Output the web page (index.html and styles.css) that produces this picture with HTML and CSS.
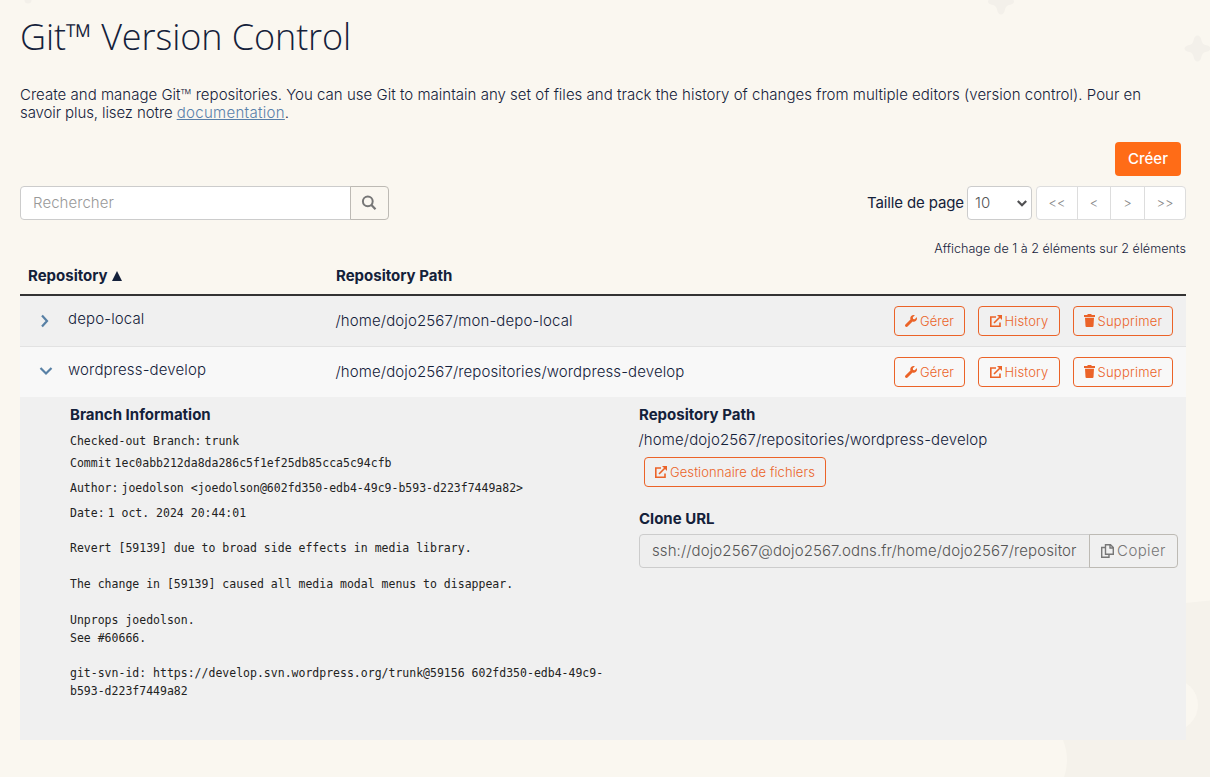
FILE: index.html
```html
<!DOCTYPE html>
<html lang="fr">
<head>
<meta charset="utf-8">
<title>Git™ Version Control</title>
<link rel="stylesheet" href="styles.css">
</head>
<body>
<svg class="backdrop" width="1210" height="777" viewBox="0 0 1210 777" aria-hidden="true">
  <defs><path id="star" d="M0-13Q3-13 4-8Q5-4 8-3.500Q13-2.500 13 0Q13 2.500 8 3.500Q5 4 4 8Q3 13 0 13Q-3 13-4 8Q-5 4-8 3.500Q-13 2.500-13 0Q-13-2.500-8-3.500Q-5-4-4-8Q-3-13 0-13Z"/></defs>
  <g fill="#f3f0ea"><use href="#star" x="1001" y="1.500"/><use href="#star" x="1197.500" y="48.500"/><circle cx="28" cy="0" r="3.500"/></g>
  <path fill="#f5f2eb" d="M1050 777V640Q1120 608 1210 600.500V777Z"/>
  <circle cx="1017" cy="760" r="50" fill="#faf7f0"/>
  <circle cx="1172" cy="705" r="26" fill="#faf7f0"/>
</svg>
<svg width="0" height="0" class="sprite" aria-hidden="true">
  <symbol id="wrench" viewBox="0 0 512 512"><path d="M507.700 109.100c-2.200-9-13.500-12.100-20.100-5.500l-74.400 74.400-67.900-11.300L334 98.900l74.400-74.400c6.600-6.600 3.400-17.900-5.700-20.200-47.400-11.700-99.600.9-136.600 37.900-39.600 39.600-50.500 97.100-34.100 147.200L18.700 402.800c-25 25-25 65.500 0 90.500s65.500 25 90.500 0l213.200-213.200c50.100 16.700 107.500 5.700 147.400-34.200 37.100-37.100 49.700-89.300 37.900-136.800z"/></symbol>
  <symbol id="external" viewBox="0 0 12 12"><path fill="none" stroke="currentColor" stroke-width="1.600" d="M6 2H.8v9.200H10V7.500M4 8l6-6"/><path d="M7 0h5v5z"/></symbol>
  <symbol id="trash" viewBox="0 0 11 13"><path d="M0 1h3l1-1h3l1 1h3v2H0zM1 3.800h9L9.500 12q0 1-1 1h-6q-1 0-1-1z"/></symbol>
</svg>
<main class="page">
  <h1 class="title">Git™ Version Control</h1>
  <p class="intro">Create and manage Git<span class="tm">™</span> repositories. You can use Git to maintain any set of files and track the history of changes from multiple editors (version control). Pour en<br><span class="tight">savoir plus, lisez notre </span><a href="#">documentation</a>.</p>
  <div class="create-row"><button class="create">Créer</button></div>
  <div class="toolbar">
    <div class="search">
      <span class="search-field">Rechercher</span>
      <button class="search-button" aria-label="Rechercher"><svg width="16" height="16" viewBox="0 0 16 16" fill="none" stroke="#767676" stroke-width="2"><circle cx="6.800" cy="6.300" r="4.900"/><path d="m10.200 9.800 4.300 4.400" stroke-width="2.200"/></svg></button>
    </div>
    <div class="pager">
      <span class="size-label">Taille de page</span>
      <span class="select">10<svg width="10" height="7" viewBox="0 0 10 7" fill="none" stroke="#505052" stroke-width="2.200"><path d="m.8 1 4.200 4.200L9.200 1"/></svg></span>
      <div class="pages"><span class="edge">&lt;&lt;</span><span>&lt;</span><span class="next">&gt;</span><span class="edge">&gt;&gt;</span></div>
    </div>
  </div>
  <p class="summary">Affichage de 1 à 2 éléments sur 2 éléments</p>
  <section class="table">
    <div class="row head"><div>Repository <i class="sort"></i></div><div>Repository Path</div></div>
    <div class="row item">
      <div class="name"><svg width="12" height="14" viewBox="0 0 12 14" class="chevron closed"><path d="m3 1.500 5 5.500-5 5.500"/></svg>depo-local</div>
      <div class="path">/home/dojo2567/mon-depo-local</div>
      <div class="actions"><button class="btn manage"><svg class="icon"><use href="#wrench"/></svg>Gérer</button><button class="btn history"><svg class="icon"><use href="#external"/></svg>History</button><button class="btn delete"><svg class="icon bin"><use href="#trash"/></svg>Supprimer</button></div>
    </div>
    <div class="row item open">
      <div class="name"><svg width="14" height="12" viewBox="0 0 14 12" class="chevron"><path d="m1.500 4 5.500 5.500L12.500 4"/></svg>wordpress-develop</div>
      <div class="path">/home/dojo2567/repositories/wordpress-develop</div>
      <div class="actions"><button class="btn manage"><svg class="icon"><use href="#wrench"/></svg>Gérer</button><button class="btn history"><svg class="icon"><use href="#external"/></svg>History</button><button class="btn delete"><svg class="icon bin"><use href="#trash"/></svg>Supprimer</button></div>
    </div>
    <div class="details">
      <div class="branch">
        <h2>Branch Information</h2>
        <div class="meta first"><span>Checked-out Branch:</span><span>trunk</span></div>
        <div class="meta"><span>Commit</span><span>1ec0abb212da8da286c5f1ef25db85cca5c94cfb</span></div>
        <div class="meta"><span>Author:</span><span>joedolson &lt;joedolson@602fd350-edb4-49c9-b593-d223f7449a82&gt;</span></div>
        <div class="meta"><span>Date:</span><span>1 oct. 2024 20:44:01</span></div>
        <pre class="message">Revert [59139] due to broad side effects in media library.

The change in [59139] caused all media modal menus to disappear.

Unprops joedolson.
See #60666.

git-svn-id: https://develop.svn.wordpress.org/trunk@59156 602fd350-edb4-49c9-
b593-d223f7449a82</pre>
      </div>
      <div class="location">
        <h2>Repository Path</h2>
        <p class="location-path path">/home/dojo2567/repositories/wordpress-develop</p>
        <button class="btn files"><svg class="icon"><use href="#external"/></svg>Gestionnaire de fichiers</button>
        <h2 class="clone-title">Clone URL</h2>
        <div class="clone"><span class="clone-url">ssh://dojo2567@dojo2567.odns.fr/home/dojo2567/repositor</span><button class="copy"><svg width="13" height="14" viewBox="0 0 13 14" fill="none" stroke="#777" stroke-width="1.400"><path d="M4.500.7h5L12.300 3.500V10.300H4.500ZM9 1v3h3M4 3.500H.7v9.800H8V11"/></svg>Copier</button></div>
      </div>
    </div>
  </section>
</main>
</body>
</html>
```
FILE: styles.css
```css
* { box-sizing: border-box; }
body { margin: 0; width: 1210px; height: 777px; overflow: hidden; background: #faf7f0; color: #14213a; font: 300 15px/18px Inter, "Liberation Sans", sans-serif; }
button { font: inherit; color: inherit; background: none; padding: 0; margin: 0; }
h1, h2, p, pre { margin: 0; }
.backdrop { position: absolute; left: 0; top: 0; z-index: -1; }
.sprite { position: absolute; }
.page { width: 1186px; padding: 17px 0 0 20px; }
.title { font: 300 36px/40px "Open Sans", sans-serif; letter-spacing: -.08px; }
.intro { margin-top: 29px; height: 36px; white-space: nowrap; letter-spacing: .02px; }
.intro .tm { font-family: "Open Sans", sans-serif; line-height: 1; }
.intro .tight { letter-spacing: -.1px; }
.intro a { color: #5880aa; text-decoration: underline; letter-spacing: .3px; }
.create-row { display: flex; justify-content: flex-end; padding-right: 5px; margin-top: 20px; }
.create { width: 66px; height: 34px; border: 0; border-radius: 4px; background: #ff6c17; color: #fff; font-weight: 500; }
.toolbar { display: flex; justify-content: space-between; margin-top: 10px; height: 34px; }
.search { display: flex; width: 369px; }
.search-field { flex: 1; padding: 7px 12px; background: #fff; border: 1px solid #ccc; border-radius: 4px 0 0 4px; color: #999; letter-spacing: .06px; }
.search-button { display: grid; place-items: center; width: 39px; margin-left: -1px; padding-right: 2px; border: 1px solid #bdbab4; border-radius: 0 4px 4px 0; }
.pager { display: flex; align-items: center; }
.size-label { font-weight: 400; margin-right: 3px; white-space: nowrap; letter-spacing: -.12px; }
.select { display: flex; justify-content: space-between; align-items: center; width: 65px; height: 34px; padding: 0 4px 0 7px; margin-right: 4px; border: 1px solid #ccc; border-radius: 4px; background: #fff; color: #555; }
.pages { display: flex; width: 150px; height: 34px; border: 1px solid #ddd; border-radius: 4px; background: #fff; color: #888; font-size: 13px; }
.pages span { flex: 0 0 33px; display: grid; place-items: center; border-right: 1px solid #ddd; }
.pages .edge { flex-basis: 41px; }
.pages .next { flex-basis: 34px; }
.pages span:last-child { flex-basis: 40px; border-right: 0; }
.summary { margin-top: 20px; height: 17px; text-align: right; font-size: 12.600px; white-space: nowrap; }
.row { display: grid; grid-template-columns: 308px 1fr auto; }
.head { height: 39px; padding: 10px 0 0 8px; border-bottom: 2px solid #333; font-weight: 700; font-size: 15px; }
.sort { display: inline-block; margin-left: 1px; border: 5.500px solid transparent; border-top: 0; border-bottom: 10px solid #14213a; }
.item { height: 51px; padding: 0 13px 0 8px; align-items: center; background: #f0f0f0; border-bottom: 1px solid #e2e2e2; }
.item.open { height: 50px; background: #f8f8f8; border: 0; }
.name { display: flex; align-items: center; padding: 0 0 4px 10px; letter-spacing: .14px; }
.path { letter-spacing: .117px; margin-left: -.500px; }
.chevron { width: 16px; margin-right: 14px; fill: none; stroke: #5880a5; stroke-width: 2.200; }
.closed { margin: 3px 15px 0 -1px; }
.actions { display: flex; gap: 13px; }
.btn { display: flex; align-items: center; justify-content: center; gap: 3px; height: 30px; padding-bottom: 1px; border: 1px solid #eb6328; border-radius: 4px; color: #eb6328; font-size: 13px; white-space: nowrap; }
.manage { width: 71px; }
.history { width: 82px; letter-spacing: .15px; }
.delete { width: 100px; letter-spacing: .23px; }
.icon { width: 12px; height: 12px; fill: currentColor; }
.bin { width: 11px; height: 13px; }
.details { display: grid; grid-template-columns: 569px 539px; height: 343px; padding: 9px 0 0 50px; background: #f0f0f0; }
h2 { font-size: 15px; line-height: 18px; font-weight: 700; }
.meta, .message { font: 400 11.510px/17.900px "DejaVu Sans Mono", monospace; color: #222; }
.meta { display: flex; gap: 3px; height: 25px; }
.first { margin-top: 9px; height: 22px; }
.message { margin-top: 10px; }
.location-path { margin-top: 7px; }
.files { width: 182px; margin: 8px 0 0 5px; letter-spacing: .08px; }
.clone-title { margin-top: 23px; }
.clone { display: flex; width: 539px; height: 34px; margin-top: 6px; color: #555; }
.clone-url { flex: 1; padding: 7px 12px; overflow: hidden; white-space: nowrap; letter-spacing: .1px; background: #eee; border: 1px solid #ccc; border-radius: 4px 0 0 4px; }
.copy { display: flex; gap: 3px; align-items: center; justify-content: center; width: 89px; margin-left: -1px; border: 1px solid #bdbab4; border-radius: 0 4px 4px 0; color: #777; letter-spacing: .4px; }
```
